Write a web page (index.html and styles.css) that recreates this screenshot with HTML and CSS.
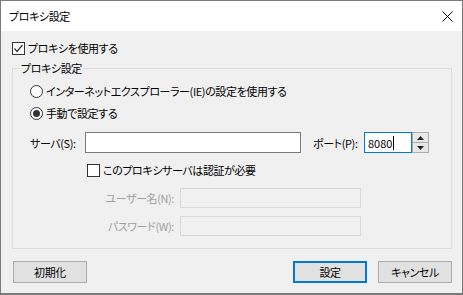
FILE: index.html
```html
<!DOCTYPE html>
<html lang="ja">

<head>
  <meta charset="UTF-8">
  <meta name="viewport" content="width=device-width, initial-scale=1.0">
  <title>プロキシ設定</title>
  <link rel="stylesheet" href="styles.css">
</head>

<body>
  <div class="window">
    <header class="titlebar">
      <span class="title">プロキシ設定</span>
      <svg class="close" width="11" height="11" viewBox="0 0 11 11">
        <path d="M0.5 0.5 L10.5 10.5 M10.5 0.5 L0.5 10.5" stroke="#000" stroke-width="1" fill="none" />
      </svg>
    </header>

    <main class="content">
      <label class="check-row use-proxy">
        <span class="checkbox">
          <svg width="11" height="11" viewBox="0 0 11 11">
            <path d="M1.5 5.5 L4 8.5 L9.5 2" stroke="#333" stroke-width="1.2" fill="none" />
          </svg>
        </span>
        プロキシを使用する
      </label>

      <div class="group">
        <span class="group-title">プロキシ設定</span>

        <label class="radio-row first">
          <span class="radio"></span>
          インターネットエクスプローラー(IE)の設定を使用する
        </label>
        <label class="radio-row">
          <span class="radio on"></span>
          手動で設定する
        </label>

        <div class="server-row">
          <span class="lbl server-lbl">サーバ(S):</span>
          <span class="field server-field"></span>
          <span class="lbl port-lbl">ポート(P):</span>
          <span class="field port-field">8080<span class="caret"></span></span>
          <span class="spin">
            <span class="spin-btn"><svg width="7" height="4" viewBox="0 0 7 4"><path d="M0 4 L3.5 0 L7 4 Z" fill="#222" /></svg></span>
            <span class="spin-btn"><svg width="7" height="4" viewBox="0 0 7 4"><path d="M0 0 L3.5 4 L7 0 Z" fill="#222" /></svg></span>
          </span>
        </div>

        <label class="check-row auth">
          <span class="checkbox"></span>
          このプロキシサーバは認証が必要
        </label>

        <div class="cred-row user">
          <span class="cred-lbl">ユーザー名(N):</span>
          <span class="field disabled"></span>
        </div>
        <div class="cred-row pass">
          <span class="cred-lbl">パスワード(W):</span>
          <span class="field disabled"></span>
        </div>
      </div>

      <div class="buttons">
        <button class="btn">初期化</button>
        <span class="spacer"></span>
        <button class="btn default">設定</button>
        <button class="btn">キャンセル</button>
      </div>
    </main>
  </div>
</body>

</html>
```

FILE: styles.css
```css
body {
  margin: 0;
  font-family: "Noto Sans CJK JP", "Noto Sans", sans-serif;
  font-size: 11px;
  letter-spacing: -0.4px;
  font-feature-settings: "palt";
  color: #000;
  background-color: #fff;
}

.window {
  width: 463px;
  height: 295px;
  box-sizing: border-box;
  border: 1px solid #7a7a7a;
  border-bottom-width: 2px;
  background-color: #f0f0f0;
  display: flex;
  flex-direction: column;
}

.titlebar {
  height: 30px;
  background-color: #fff;
  display: flex;
  align-items: center;
  padding: 0 9px 0 8px;
}

.title {
  flex: 1;
  line-height: 16px;
}

.content {
  flex: 1;
  padding: 0 10px 0 11px;
}

.check-row, .radio-row {
  display: flex;
  align-items: center;
  height: 16px;
  line-height: 16px;
  white-space: nowrap;
}

.use-proxy {
  margin-top: 9px;
}

.checkbox {
  width: 13px;
  height: 13px;
  box-sizing: border-box;
  border: 1px solid #333;
  background-color: #fff;
  margin-right: 3px;
  display: flex;
  align-items: center;
  justify-content: center;
}

.radio {
  width: 13px;
  height: 13px;
  box-sizing: border-box;
  border: 1px solid #333;
  border-radius: 50%;
  background-color: #fff;
  margin-right: 3px;
  display: flex;
  align-items: center;
  justify-content: center;
}

.radio.on::after {
  content: "";
  width: 7px;
  height: 7px;
  border-radius: 50%;
  background-color: #333;
}

.group {
  position: relative;
  margin-top: 12px;
  height: 181px;
  box-sizing: border-box;
  border: 1px solid #dcdcdc;
  padding: 0 0 0 17px;
}

.group-title {
  position: absolute;
  left: 7px;
  top: -9px;
  padding: 0 1px;
  line-height: 16px;
  background-color: #f0f0f0;
}

.radio-row.first {
  margin-top: 14px;
}

.radio-row {
  margin-top: 6px;
}

.server-row {
  display: flex;
  align-items: center;
  height: 21px;
  margin-top: 11px;
}

.lbl {
  white-space: nowrap;
}

.server-lbl {
  width: 55px;
}

.field {
  height: 21px;
  box-sizing: border-box;
  border: 1px solid #7a7a7a;
  background-color: #fff;
  display: flex;
  align-items: center;
  padding-left: 3px;
  letter-spacing: 0;
}

.server-field {
  width: 216px;
}

.port-lbl {
  width: 51px;
  margin-left: 12px;
}

.port-field {
  width: 48px;
  border-color: #0078d7;
}

.caret {
  width: 1px;
  height: 14px;
  background-color: #000;
  margin-left: 1px;
}

.spin {
  width: 17px;
  height: 21px;
  box-sizing: border-box;
  border: 1px solid #adadad;
  display: flex;
  flex-direction: column;
  background-color: #e8e8e8;
}

.spin-btn {
  flex: 1;
  display: flex;
  align-items: center;
  justify-content: center;
}

.spin-btn + .spin-btn {
  border-top: 1px solid #adadad;
}

.auth {
  margin-top: 9px;
  padding-left: 57px;
}

.cred-row {
  display: flex;
  align-items: center;
  height: 20px;
}

.cred-row.user {
  margin-top: 10px;
}

.cred-row.pass {
  margin-top: 8px;
}

.cred-lbl {
  width: 161px;
  margin-left: -17px;
  padding-right: 6px;
  text-align: right;
  color: #a0a0a0;
  white-space: nowrap;
}

.field.disabled {
  width: 181px;
  height: 20px;
  border-color: #d9d9d9;
  background-color: #f0f0f0;
}

.buttons {
  display: flex;
  margin-top: 12px;
  padding: 0 0 0 1px;
}

.spacer {
  flex: 1;
}

.btn {
  width: 74px;
  height: 22px;
  box-sizing: border-box;
  border: 1px solid #adadad;
  background-color: #e1e1e1;
  font-family: inherit;
  font-size: 11px;
  letter-spacing: -0.4px;
  font-feature-settings: "palt";
  color: #000;
  padding: 0;
}

.btn.default {
  border: 2px solid #0078d7;
  margin-right: 11px;
}
```
